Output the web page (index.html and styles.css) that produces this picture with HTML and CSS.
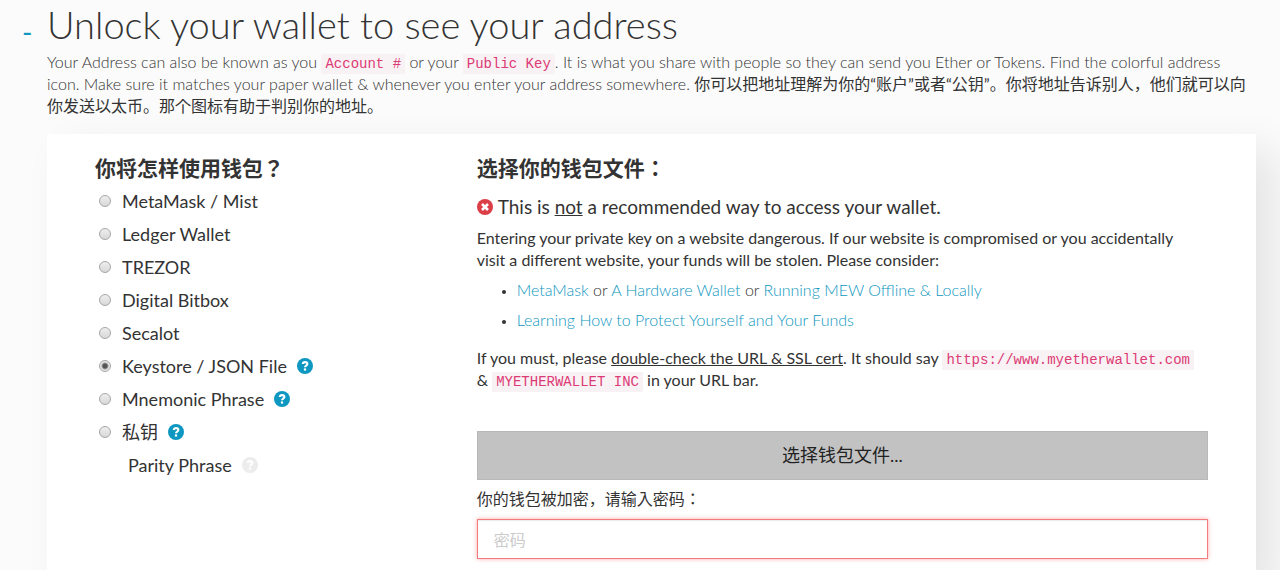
FILE: index.html
```html
<!DOCTYPE html>
<html lang="en">

<head>
    <meta charset="UTF-8" />
    <meta name="viewport" content="width=device-width, initial-scale=1" />
    <title>MyEtherWallet</title>
    <link rel="stylesheet" href="styles.css">
</head>

<body>

    <!-- Shared icons -->
    <svg class="sprite" aria-hidden="true">
        <symbol id="icon-help" viewBox="0 0 16 16">
            <circle cx="8" cy="8" r="8" />
            <path d="M5.8 6.1C5.8 4.8 6.7 4.1 8 4.1s2.4.7 2.4 1.9c0 1.6-2.4 1.5-2.4 3.2" fill="none" stroke="#fff" stroke-width="2.1" />
            <rect x="6.9" y="10.4" width="2.2" height="2.2" fill="#fff" />
        </symbol>
        <symbol id="icon-error" viewBox="0 0 16 16">
            <circle cx="8" cy="8" r="8" />
            <path d="M5 5l6 6M11 5l-6 6" fill="none" stroke="#fff" stroke-width="2.6" />
        </symbol>
    </svg>

    <main class="page">
        <header class="pane-header">
            <a class="toggle" href="#wallet">-</a>
            <h1 class="title">Unlock your wallet to see your address</h1>
        </header>

        <p class="intro">
            Your Address can also be known as you <code>Account #</code> or your <code>Public Key</code>. It is what you share with people so they can send you Ether or Tokens. Find the colorful address icon. Make sure it matches your paper wallet &amp; whenever you enter your address somewhere.
            <span class="cjk">你可以把地址理解为你的“账户”或者“公钥”。你将地址告诉别人，他们就可以向你发送以太币。那个图标有助于判别你的地址。</span>
        </p>

        <form class="card" id="wallet">
            <fieldset class="col">
                <legend class="heading">你将怎样使用钱包？</legend>
                <div class="radio">
                    <label><input type="radio" name="access" />MetaMask / Mist</label>
                </div>
                <div class="radio">
                    <label><input type="radio" name="access" />Ledger Wallet</label>
                </div>
                <div class="radio">
                    <label><input type="radio" name="access" />TREZOR</label>
                </div>
                <div class="radio">
                    <label><input type="radio" name="access" />Digital Bitbox</label>
                </div>
                <div class="radio">
                    <label><input type="radio" name="access" />Secalot</label>
                </div>
                <div class="radio">
                    <label><input type="radio" name="access" checked />Keystore / JSON File</label>
                    <a class="help" href="#help" aria-label="Help"><svg class="icon"><use href="#icon-help" /></svg></a>
                </div>
                <div class="radio">
                    <label><input type="radio" name="access" />Mnemonic Phrase</label>
                    <a class="help" href="#help" aria-label="Help"><svg class="icon"><use href="#icon-help" /></svg></a>
                </div>
                <div class="radio">
                    <label><input type="radio" name="access" />私钥</label>
                    <a class="help" href="#help" aria-label="Help"><svg class="icon"><use href="#icon-help" /></svg></a>
                </div>
                <div class="radio radio-plain">
                    <span>Parity Phrase</span>
                    <a class="help help-muted" href="#help" aria-label="Help"><svg class="icon"><use href="#icon-help" /></svg></a>
                </div>
            </fieldset>

            <section class="col">
                <h2 class="heading">选择你的钱包文件：</h2>
                <h3 class="warning">
                    <svg class="icon icon-error"><use href="#icon-error" /></svg>
                    <span>This is <u>not</u> a recommended way to access your wallet.</span>
                </h3>
                <p class="text">Entering your private key on a website dangerous. If our website is compromised or you accidentally visit a different website, your funds will be stolen. Please consider:</p>
                <ul class="options">
                    <li><a href="#metamask">MetaMask</a> or <a href="#hardware">A Hardware Wallet</a> or <a href="#offline">Running MEW Offline &amp; Locally</a></li>
                    <li><a href="#protect">Learning How to Protect Yourself and Your Funds</a></li>
                </ul>
                <p class="text">If you must, please <u>double-check the URL &amp; SSL cert</u>. It should say <code>https://www.myetherwallet.com</code> &amp; <code>MYETHERWALLET INC</code> in your URL bar.</p>

                <button class="btn-file" type="button">选择钱包文件...</button>
                <label class="password-label" for="password">你的钱包被加密，请输入密码：</label>
                <input class="password" id="password" type="password" placeholder="密码" />
            </section>
        </form>
    </main>

</body>

</html>
```
FILE: styles.css
```css
* {
    box-sizing: border-box;
}

body {
    margin: 0;
    background: #fbfbfb;
    color: #333;
    font-family: Lato, "Noto Sans CJK JP", sans-serif;
    font-size: 16px;
    line-height: 22px;
    overflow: hidden;
}

a {
    color: #0e97c0;
    text-decoration: none;
}

code {
    padding: 2px 4px;
    background: #f9f2f4;
    color: #dc3a74;
    font-family: "Liberation Mono", monospace;
    font-size: 14px;
    line-height: 14px;
}

.sprite {
    position: absolute;
    width: 0;
    height: 0;
}

.page {
    padding: 0 24px 0 47px;
}

.pane-header {
    display: flex;
    height: 51px;
    margin-left: -25px;
}

.toggle {
    width: 25px;
    padding-top: 8px;
    font-size: 28px;
    line-height: 48px;
}

.title {
    margin: 0;
    font-size: 38px;
    font-weight: 300;
    line-height: 48px;
}

.intro {
    margin: 0;
    font-weight: 300;
}

.cjk {
    font-weight: 400;
}

.card {
    display: grid;
    grid-template-columns: minmax(0, 1fr) minmax(0, 2fr);
    margin-top: 17px;
    padding: 20px 32px;
    background: #fff;
    box-shadow: 20px 16px 40px rgba(0, 0, 0, 0.09);
}

.col {
    min-width: 0;
    margin: 0;
    padding: 0 16px;
    border: 0;
}

.heading {
    margin: 0;
    padding: 0;
    font-size: 21px;
    font-weight: 700;
    line-height: 28px;
}

legend.heading {
    padding-bottom: 2px;
}

.radio {
    display: flex;
    align-items: center;
    gap: 10px;
    height: 33px;
    font-size: 18px;
}

.radio label {
    display: flex;
    align-items: center;
}

.radio input {
    appearance: none;
    width: 12px;
    height: 12px;
    margin: 0 11px 0 4px;
    border: 1px solid #a6a6a6;
    border-radius: 50%;
    background: linear-gradient(#eee, #d8d8d8);
}

.radio input:checked {
    background: radial-gradient(circle, #555 0, #555 2px, #e6e6e6 4px);
}

.radio-plain {
    padding-left: 33px;
}

.icon {
    display: block;
    width: 16px;
    height: 16px;
    fill: #0e97c0;
}

.help-muted .icon {
    fill: #ececec;
}

.icon-error {
    fill: #dc3e48;
}

.warning {
    display: flex;
    align-items: center;
    gap: 5px;
    margin: 12px 0 7px;
    font-size: 19px;
    font-weight: 400;
    line-height: 26px;
}

.text {
    margin: 0;
    padding-right: 8px;
}

.options {
    margin: 8px 0 16px;
    padding-left: 40px;
    font-weight: 300;
}

.options li + li {
    margin-top: 8px;
}

.options li::marker {
    font-size: 12px;
}

.btn-file {
    display: block;
    width: 100%;
    margin-top: 40px;
    padding: 11px 16px;
    border: 1px solid #b8b8b8;
    background: #c2c2c2;
    color: #222;
    font: inherit;
    font-size: 18px;
    line-height: 25px;
}

.password-label {
    display: block;
    margin: 8px 0 9px;
}

.password {
    display: block;
    width: 100%;
    height: 40px;
    padding: 0 16px;
    border: 1px solid #f47c7c;
    background: #fff;
    box-shadow: inset 0 1px 1px rgba(0, 0, 0, 0.08), 0 0 4px rgba(255, 80, 80, 0.5);
    font: inherit;
    outline: none;
}

.password::placeholder {
    color: #ccc;
}
```
